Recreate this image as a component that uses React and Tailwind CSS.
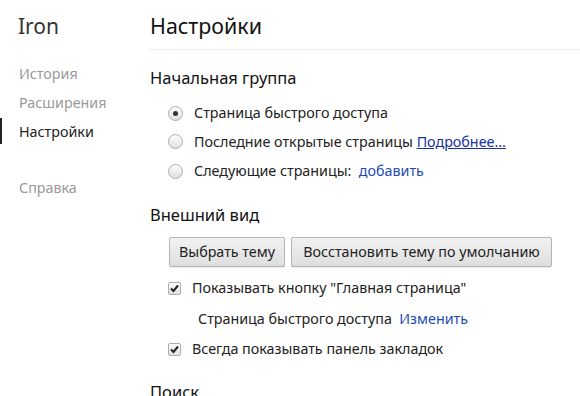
import React from "react";

const font = { fontFamily: '"Segoe UI", "Noto Sans", "Open Sans", sans-serif' };

function Radio({ checked }) {
  return (
    <span className="relative inline-block w-[15px] h-[15px] rounded-full border border-[#adadad] bg-gradient-to-b from-[#fdfdfd] to-[#e0e0e0] shrink-0">
      {checked && (
        <span className="absolute left-[4px] top-[4px] w-[5px] h-[5px] rounded-full bg-[#333]" />
      )}
    </span>
  );
}

function Check() {
  return (
    <span className="relative inline-flex items-center justify-center w-[13px] h-[13px] rounded-[2px] border border-[#adadad] bg-gradient-to-b from-[#fdfdfd] to-[#e0e0e0] shrink-0">
      <svg width="11" height="11" viewBox="0 0 11 11">
        <path d="M2 5.5 L4.5 8 L9 2.5" fill="none" stroke="#222" strokeWidth="2" />
      </svg>
    </span>
  );
}

function Btn({ children, w }) {
  return (
    <div className={`h-[30px] ${w} flex items-center justify-center rounded-[2px] border border-[#b4b4b4] bg-gradient-to-b from-[#f2f2f2] to-[#dedede] text-[14.3px] text-[#222] shadow-[0_1px_0_rgba(0,0,0,0.08)]`}>
      {children}
    </div>
  );
}

export default function App() {
  return (
    <div className="w-[580px] h-[396px] overflow-hidden bg-white flex items-start text-[#222]" style={font}>
      <div className="w-[150px] shrink-0">
        <div className="h-[50px] pl-[18px] pt-[12px] text-[21px] text-[#333] leading-[28px]">Iron</div>
        <div className="h-[10px]" />
        <div className="h-[28px] pl-[19px] flex items-center text-[14.3px] text-[#999]">История</div>
        <div className="h-[29px] pl-[19px] flex items-center text-[14.3px] text-[#999]">Расширения</div>
        <div className="relative h-[29px] pl-[19px] flex items-center text-[14.3px] text-[#222]">
          <span className="absolute left-0 top-[1px] w-[2px] h-[26px] bg-[#222]" />
          Настройки
        </div>
        <div className="h-[27px]" />
        <div className="h-[29px] pl-[19px] flex items-center text-[14.3px] text-[#999]">Справка</div>
      </div>
      <div className="flex-1 min-w-0">
        <div className="h-[50px] border-b border-[#eaeaea] pt-[12px] text-[21.4px] leading-[28px] text-[#111]">Настройки</div>
        <div className="h-[13px]" />
        <div className="h-[30px] flex items-center text-[16.5px] text-[#111]">Начальная группа</div>
        <div className="h-[6px]" />
        <div className="pl-[18px]">
          <div className="h-[28px] flex items-center gap-[11px] text-[14.3px]">
            <Radio checked />
            <span>Страница быстрого доступа</span>
          </div>
          <div className="h-[29px] flex items-center gap-[11px] text-[14.3px]">
            <Radio />
            <span>
              Последние открытые страницы{" "}
              <span className="text-[#1530a5] underline">Подробнее...</span>
            </span>
          </div>
          <div className="h-[30px] flex items-center gap-[11px] text-[14.3px]">
            <Radio />
            <span>
              Следующие страницы:&nbsp;&nbsp;<span className="text-[#1e4bb5]">добавить</span>
            </span>
          </div>
        </div>
        <div className="h-[14px]" />
        <div className="h-[30px] flex items-center text-[16.5px] text-[#111]">Внешний вид</div>
        <div className="h-[7px]" />
        <div className="pl-[19px] flex gap-[6px]">
          <Btn w="w-[116px]">Выбрать тему</Btn>
          <Btn w="w-[261px]">Восстановить тему по умолчанию</Btn>
        </div>
        <div className="h-[6px]" />
        <div className="pl-[18px]">
          <div className="h-[30px] flex items-center gap-[11px] text-[14.3px]">
            <Check />
            <span>Показывать кнопку "Главная страница"</span>
          </div>
          <div className="h-[31px] flex items-center pl-[30px] text-[14.3px]">
            <span>
              Страница быстрого доступа&nbsp;&nbsp;<span className="text-[#1e4bb5]">Изменить</span>
            </span>
          </div>
          <div className="h-[30px] flex items-center gap-[11px] text-[14.3px]">
            <Check />
            <span>Всегда показывать панель закладок</span>
          </div>
        </div>
        <div className="h-[13px]" />
        <div className="h-[30px] flex items-center text-[16.5px] text-[#111]">Поиск</div>
      </div>
    </div>
  );
}
